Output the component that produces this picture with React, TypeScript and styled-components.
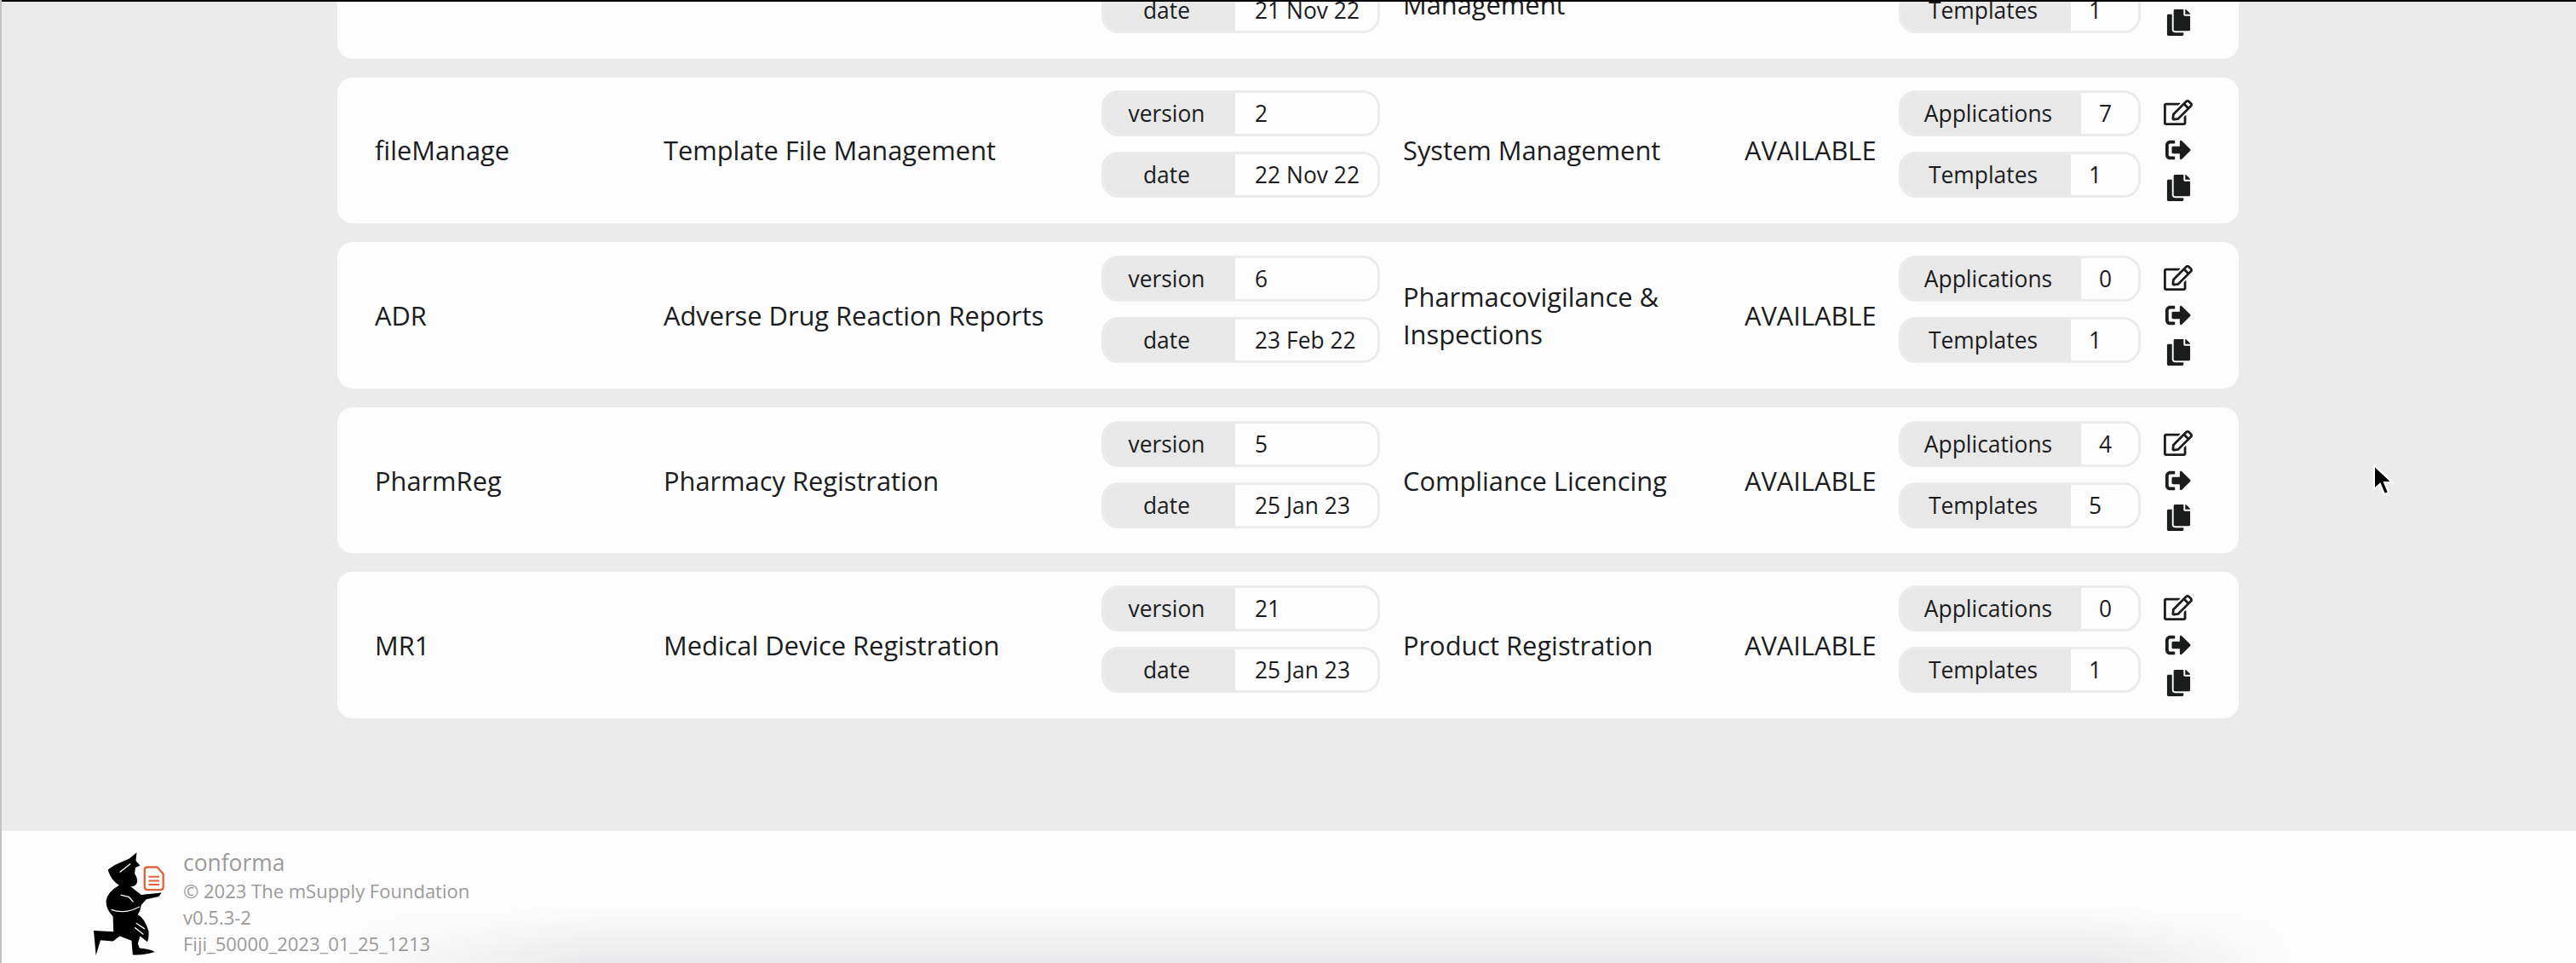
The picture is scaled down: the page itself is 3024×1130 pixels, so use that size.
import React from 'react';
import styled, { createGlobalStyle } from 'styled-components';
import { FaRegEdit, FaSignOutAlt, FaCopy } from 'react-icons/fa';

const GlobalStyle = createGlobalStyle`
  html, body {
    margin: 0;
    padding: 0;
    background: #ebebeb;
  }
  * {
    box-sizing: border-box;
  }
`;

const Page = styled.div`
  position: relative;
  display: flex;
  flex-direction: column;
  width: 3024px;
  height: 1130px;
  overflow: hidden;
  border-left: 2px solid #c2c2c4;

  font-family: 'Open Sans', sans-serif;
  color: #1b1c1d;
  background-color: #ebebeb;
`;

const TopLine = styled.div`
  position: absolute;
  top: 0;
  left: 0;
  right: 0;
  height: 2px;
  background-color: #000;
`;

const Main = styled.main`
  flex: 1;
  min-height: 0;
`;

const List = styled.div`
  display: flex;
  flex-direction: column;
  gap: 22px;

  width: 2232px;
  margin: -103px auto 0 394px;
`;

const Card = styled.div`
  display: grid;
  grid-template-columns: 339px 514px 354px 401px 181px 312px 1fr;
  align-items: center;

  height: 171.6px;
  padding-left: 44px;

  font-size: 30.8px;
  line-height: 44px;
  background-color: #fdfdfd;
  border-radius: 18px;
`;

const PillStack = styled.div`
  display: flex;
  flex-direction: column;
  gap: 18px;
  padding-bottom: 14px;
`;

const Pill = styled.div<{ $width: number }>`
  display: flex;
  align-items: stretch;

  width: ${(props) => props.$width}px;
  height: 54px;

  font-size: 26.4px;
  line-height: 48px;
  border: 3px solid #ebebeb;
  border-radius: 20px;
  overflow: hidden;
`;

const PillLabel = styled.span<{ $width: number }>`
  flex: 0 0 ${(props) => props.$width}px;
  padding-right: 7px;
  text-align: center;
  background-color: #e8e8e8;
`;

const PillValue = styled.span<{ $inset: number }>`
  flex: 1;
  padding-left: ${(props) => props.$inset}px;
  background-color: #fdfdfd;
`;

const Actions = styled.div`
  display: flex;
  flex-direction: column;
  align-items: center;

  width: 32px;
`;

const ActionRow = styled.span<{ $size: number }>`
  display: flex;
  align-items: center;
  justify-content: center;
  height: 44px;
  font-size: ${(props) => props.$size}px;
`;

const Footer = styled.footer`
  position: relative;
  display: flex;
  gap: 22px;

  height: 155px;
  padding: 25px 0 0 108px;

  background-color: #fdfdfd;

  &::after {
    content: '';
    position: absolute;
    left: 0;
    right: 0;
    bottom: 0;
    height: 66px;
    background: linear-gradient(to bottom, rgba(232, 232, 234, 0), #e8e8ea);
    mask-image: linear-gradient(
      to right,
      transparent 380px,
      #000 700px,
      #000 2450px,
      transparent 2700px
    );
  }
`;

const Logo = styled.svg`
  flex: none;
  width: 83px;
  height: 122px;
`;

const FooterText = styled.div`
  position: relative;
  z-index: 1;
  display: flex;
  flex-direction: column;
  margin-top: -6px;

  font-size: 22px;
  line-height: 31px;
  color: #9a9a9a;
`;

const BrandName = styled.span`
  font-size: 26.4px;
  line-height: 36px;
`;

const Cursor = styled.svg`
  position: absolute;
  left: 2783px;
  top: 544px;
  width: 24px;
  height: 38px;
`;

type Row = {
  code: string;
  name: string;
  version: string;
  date: string;
  category: React.ReactNode;
  applications: string;
  templates: string;
};

const rows: Row[] = [
  {
    // scrolled off the top of the page, only its lower part shows
    code: '',
    name: '',
    version: '',
    date: '21 Nov 22',
    category: (
      <>
        &nbsp;
        <br />
        Management
      </>
    ),
    applications: '',
    templates: '1',
  },
  {
    code: 'fileManage',
    name: 'Template File Management',
    version: '2',
    date: '22 Nov 22',
    category: 'System Management',
    applications: '7',
    templates: '1',
  },
  {
    code: 'ADR',
    name: 'Adverse Drug Reaction Reports',
    version: '6',
    date: '23 Feb 22',
    category: 'Pharmacovigilance & Inspections',
    applications: '0',
    templates: '1',
  },
  {
    code: 'PharmReg',
    name: 'Pharmacy Registration',
    version: '5',
    date: '25 Jan 23',
    category: 'Compliance Licencing',
    applications: '4',
    templates: '5',
  },
  {
    code: 'MR1',
    name: 'Medical Device Registration',
    version: '21',
    date: '25 Jan 23',
    category: 'Product Registration',
    applications: '0',
    templates: '1',
  },
];

const TemplateCard = ({ row }: { row: Row }) => (
  <Card>
    <span>{row.code}</span>
    <span>{row.name}</span>
    <PillStack>
      <Pill $width={327}>
        <PillLabel $width={154}>version</PillLabel>
        <PillValue $inset={23}>{row.version}</PillValue>
      </Pill>
      <Pill $width={327}>
        <PillLabel $width={154}>date</PillLabel>
        <PillValue $inset={23}>{row.date}</PillValue>
      </Pill>
    </PillStack>
    <span>{row.category}</span>
    <span>AVAILABLE</span>
    <PillStack>
      <Pill $width={284}>
        <PillLabel $width={211}>Applications</PillLabel>
        <PillValue $inset={21}>{row.applications}</PillValue>
      </Pill>
      <Pill $width={284}>
        <PillLabel $width={199}>Templates</PillLabel>
        <PillValue $inset={21}>{row.templates}</PillValue>
      </Pill>
    </PillStack>
    <Actions>
      <ActionRow $size={34}>
        <FaRegEdit />
      </ActionRow>
      <ActionRow $size={30}>
        <FaSignOutAlt />
      </ActionRow>
      <ActionRow $size={31}>
        <FaCopy />
      </ActionRow>
    </Actions>
  </Card>
);

export default function App() {
  return (
    <Page>
      <GlobalStyle />
      <Main>
        <List>
          {rows.map((row) => (
            <TemplateCard key={row.date + row.version} row={row} />
          ))}
        </List>
      </Main>

      <Footer>
        <Logo viewBox="60 30 250 366">
          <path
            fill="#000"
            d="M110 92 Q130 75 150 68 L186 52 L212 30 L209 60 L224 76 L207 84 L205 105 Q218 122 212 140 Q205 152 190 150 Q208 165 228 180 L300 172 L290 186 L246 196 L228 216 Q226 236 216 250 Q240 262 254 308 Q256 330 250 346 L224 326 L216 352 L222 368 Q262 372 276 382 Q240 394 198 392 L194 342 L152 326 L128 344 L84 340 L68 394 L60 306 L130 310 L128 256 Q102 230 104 200 Q108 170 150 146 Q122 130 110 92 Z"
          />
          <path
            d="M152 100 L190 70 M155 180 L185 188 L200 205 M122 232 Q170 250 222 222 M210 280 L240 300 M205 295 L236 320"
            fill="none"
            stroke="#fff"
            strokeWidth="4"
          />
          <path
            d="M250 82 H284 L306 106 V152 Q306 162 296 162 H250 Q240 162 240 152 V92 Q240 82 250 82 Z"
            fill="#fff"
            stroke="#e0623a"
            strokeWidth="7"
          />
          <path
            d="M254 116 H292 M254 130 H292 M254 144 H292"
            stroke="#e0623a"
            strokeWidth="6"
          />
        </Logo>
        <FooterText>
          <BrandName>conforma</BrandName>
          <span>© 2023 The mSupply Foundation</span>
          <span>v0.5.3-2</span>
          <span>Fiji_50000_2023_01_25_1213</span>
        </FooterText>
      </Footer>

      <TopLine />
      <Cursor viewBox="0 0 24 38">
        <path
          d="M2 2 V30 L9 24 L14 36 L19 34 L14 22 L23 22 Z"
          fill="#000"
          stroke="#fff"
          strokeWidth="2"
        />
      </Cursor>
    </Page>
  );
}
